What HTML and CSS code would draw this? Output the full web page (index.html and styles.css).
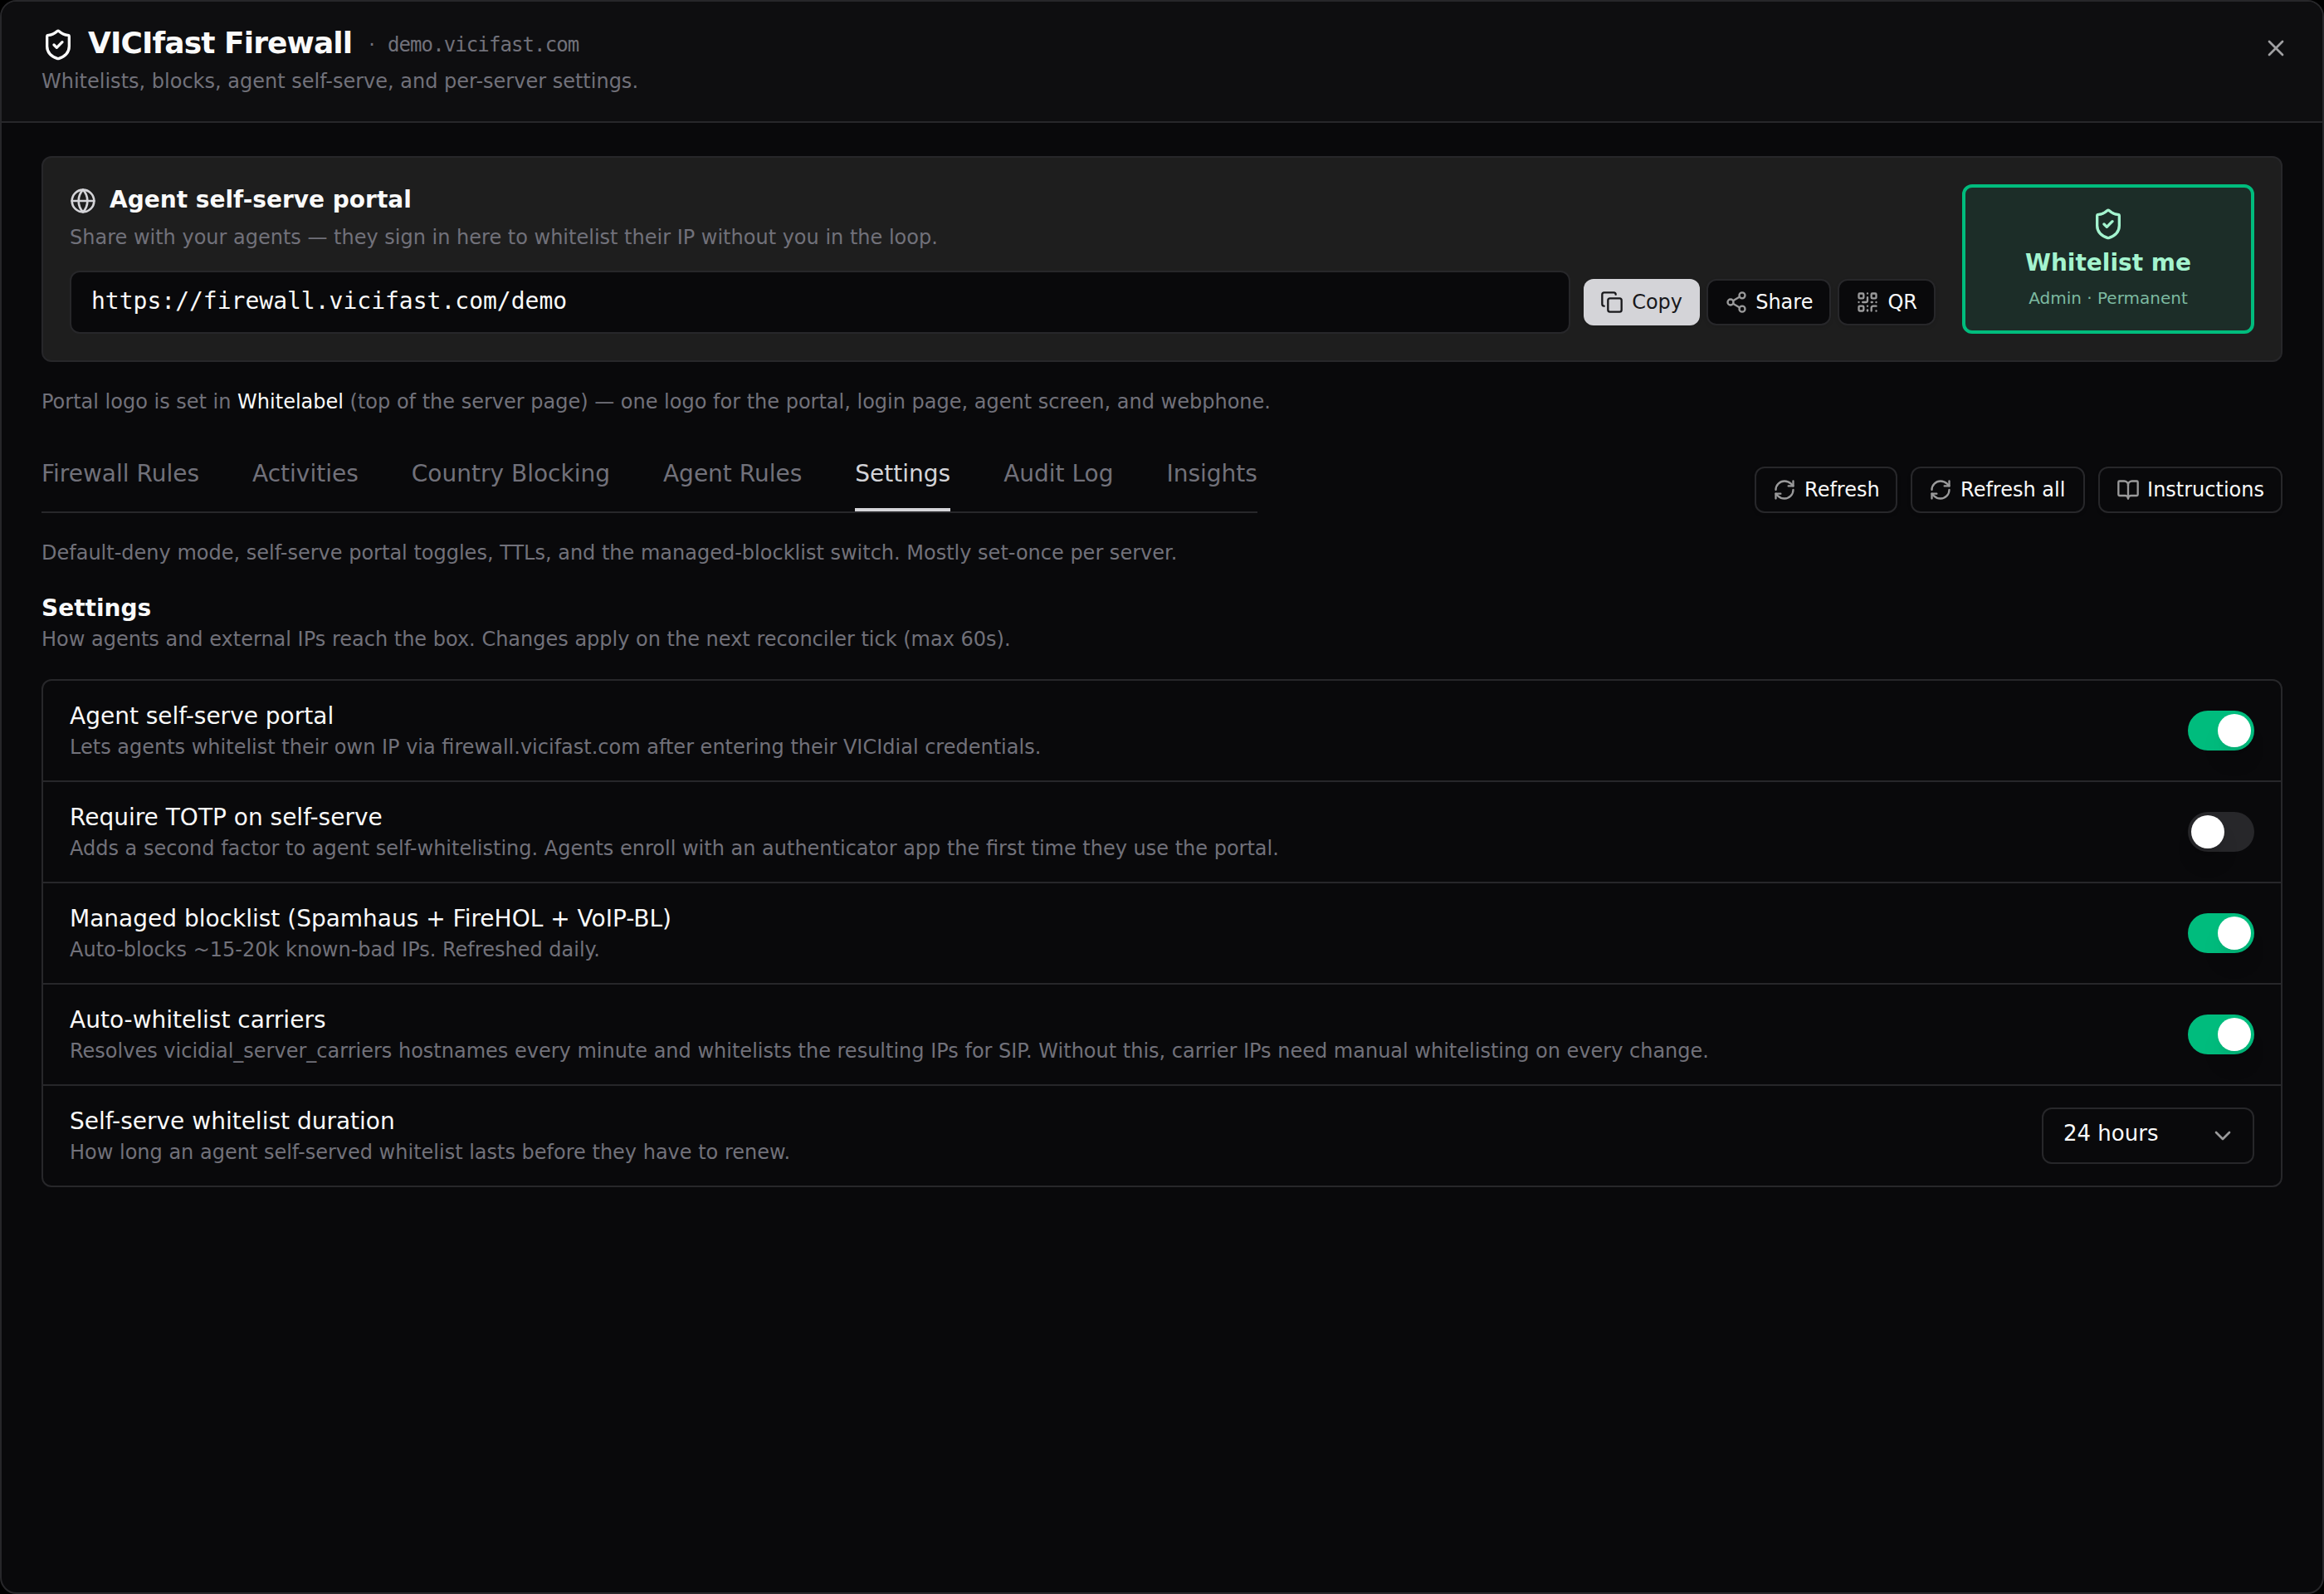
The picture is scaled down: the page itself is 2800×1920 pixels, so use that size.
FILE: index.html
```
<!DOCTYPE html>
<html lang="en">
<head>
<meta charset="utf-8">
<title>VICIfast Firewall</title>
<link rel="stylesheet" href="styles.css">
</head>
<body>
<svg class="sprite" aria-hidden="true">
  <symbol id="shield" viewBox="0 0 24 24"><path d="M20 13c0 5-3.5 7.5-7.66 8.95a1 1 0 0 1-.67-.01C7.5 20.5 4 18 4 13V6a1 1 0 0 1 1-1c2 0 4.5-1.2 6.24-2.72a1.17 1.17 0 0 1 1.52 0C14.51 3.81 17 5 19 5a1 1 0 0 1 1 1z"/><path d="m9 12 2 2 4-4"/></symbol>
  <symbol id="globe" viewBox="0 0 24 24"><circle cx="12" cy="12" r="10"/><path d="M12 2a14.5 14.5 0 0 0 0 20 14.5 14.5 0 0 0 0-20"/><path d="M2 12h20"/></symbol>
  <symbol id="copy" viewBox="0 0 24 24"><rect width="14" height="14" x="8" y="8" rx="2" ry="2"/><path d="M4 16c-1.1 0-2-.9-2-2V4c0-1.1.9-2 2-2h10c1.1 0 2 .9 2 2"/></symbol>
  <symbol id="share" viewBox="0 0 24 24"><circle cx="18" cy="5" r="3"/><circle cx="6" cy="12" r="3"/><circle cx="18" cy="19" r="3"/><path d="m8.59 13.51 6.83 3.98M15.41 6.51l-6.82 3.98"/></symbol>
  <symbol id="qr" viewBox="0 0 24 24"><rect width="5" height="5" x="3" y="3" rx="1"/><rect width="5" height="5" x="16" y="3" rx="1"/><rect width="5" height="5" x="3" y="16" rx="1"/><path d="M21 16h-3a2 2 0 0 0-2 2v3"/><path d="M21 21v.01"/><path d="M12 7v3a2 2 0 0 1-2 2H7"/><path d="M3 12h.01"/><path d="M12 3h.01"/><path d="M12 16v.01"/><path d="M16 12h1"/><path d="M21 12v.01"/><path d="M12 21v-1"/></symbol>
  <symbol id="refresh" viewBox="0 0 24 24"><path d="M3 12a9 9 0 0 1 9-9 9.75 9.75 0 0 1 6.74 2.74L21 8"/><path d="M21 3v5h-5"/><path d="M21 12a9 9 0 0 1-9 9 9.75 9.75 0 0 1-6.74-2.74L3 16"/><path d="M8 16H3v5"/></symbol>
  <symbol id="book" viewBox="0 0 24 24"><path d="M12 7v14"/><path d="M3 18a1 1 0 0 1-1-1V4a1 1 0 0 1 1-1h5a4 4 0 0 1 4 4 4 4 0 0 1 4-4h5a1 1 0 0 1 1 1v13a1 1 0 0 1-1 1h-6a3 3 0 0 0-3 3 3 3 0 0 0-3-3z"/></symbol>
  <symbol id="close" viewBox="0 0 24 24"><path d="M18 6 6 18"/><path d="m6 6 12 12"/></symbol>
  <symbol id="chevron" viewBox="0 0 24 24"><path d="m6 9 6 6 6-6"/></symbol>
</svg>
<div class="dialog">
  <header class="header">
    <div>
      <div class="title-row">
        <svg class="icon icon-xl"><use href="#shield"/></svg>
        <h1 class="title">VICIfast Firewall</h1>
        <span class="host-dot">·</span>
        <span class="host">demo.vicifast.com</span>
      </div>
      <p class="muted">Whitelists, blocks, agent self-serve, and per-server settings.</p>
    </div>
    <button class="close"><svg class="icon icon-lg"><use href="#close"/></svg></button>
  </header>
  <main class="body">
    <section class="portal">
      <div class="portal-main">
        <div class="portal-title">
          <svg class="icon icon-lg"><use href="#globe"/></svg>
          <h2 class="heading">Agent self-serve portal</h2>
        </div>
        <p class="muted portal-sub">Share with your agents — they sign in here to whitelist their IP without you in the loop.</p>
        <div class="url-row">
          <div class="url">https://firewall.vicifast.com/demo</div>
          <div class="url-actions">
            <button class="btn btn-primary"><svg class="icon"><use href="#copy"/></svg>Copy</button>
            <button class="btn btn-snug"><svg class="icon"><use href="#share"/></svg>Share</button>
            <button class="btn"><svg class="icon"><use href="#qr"/></svg>QR</button>
          </div>
        </div>
      </div>
      <button class="whitelist">
        <svg class="icon icon-xl"><use href="#shield"/></svg>
        <span class="whitelist-label">Whitelist me</span>
        <span class="whitelist-sub">Admin · Permanent</span>
      </button>
    </section>
    <p class="muted">Portal logo is set in <span class="strong">Whitelabel</span> (top of the server page) — one logo for the portal, login page, agent screen, and webphone.</p>
    <div class="toolbar">
      <nav class="tabs">
        <a class="tab">Firewall Rules</a>
        <a class="tab">Activities</a>
        <a class="tab">Country Blocking</a>
        <a class="tab">Agent Rules</a>
        <a class="tab tab-active">Settings</a>
        <a class="tab">Audit Log</a>
        <a class="tab">Insights</a>
      </nav>
      <div class="toolbar-actions">
        <button class="btn btn-refresh"><svg class="icon"><use href="#refresh"/></svg>Refresh</button>
        <button class="btn btn-refresh-all"><svg class="icon"><use href="#refresh"/></svg>Refresh all</button>
        <button class="btn btn-snug"><svg class="icon"><use href="#book"/></svg>Instructions</button>
      </div>
    </div>
    <p class="muted">Default-deny mode, self-serve portal toggles, TTLs, and the managed-blocklist switch. Mostly set-once per server.</p>
    <div>
      <h2 class="heading">Settings</h2>
      <p class="muted">How agents and external IPs reach the box. Changes apply on the next reconciler tick (max 60s).</p>
    </div>
    <section class="settings">
      <div class="row">
        <div><h3 class="row-title">Agent self-serve portal</h3><p class="muted">Lets agents whitelist their own IP via firewall.vicifast.com after entering their VICIdial credentials.</p></div>
        <span class="switch switch-on"><span class="knob"></span></span>
      </div>
      <div class="row">
        <div><h3 class="row-title">Require TOTP on self-serve</h3><p class="muted">Adds a second factor to agent self-whitelisting. Agents enroll with an authenticator app the first time they use the portal.</p></div>
        <span class="switch"><span class="knob"></span></span>
      </div>
      <div class="row">
        <div><h3 class="row-title">Managed blocklist (Spamhaus + FireHOL + VoIP-BL)</h3><p class="muted">Auto-blocks ~15-20k known-bad IPs. Refreshed daily.</p></div>
        <span class="switch switch-on"><span class="knob"></span></span>
      </div>
      <div class="row">
        <div><h3 class="row-title">Auto-whitelist carriers</h3><p class="muted">Resolves vicidial_server_carriers hostnames every minute and whitelists the resulting IPs for SIP. Without this, carrier IPs need manual whitelisting on every change.</p></div>
        <span class="switch switch-on"><span class="knob"></span></span>
      </div>
      <div class="row">
        <div><h3 class="row-title">Self-serve whitelist duration</h3><p class="muted">How long an agent self-served whitelist lasts before they have to renew.</p></div>
        <div class="select"><span class="select-value">24 hours</span><svg class="icon icon-lg"><use href="#chevron"/></svg></div>
      </div>
    </section>
  </main>
</div>
</body>
</html>
```
FILE: styles.css
```
* { box-sizing: border-box; margin: 0; padding: 0; }

body {
  background: #000;
  color: #fafafa;
  font-family: "DejaVu Sans", sans-serif;
  font-size: 24px;
  line-height: 32px;
}

button { font: inherit; color: inherit; background: none; border: 0; }

.sprite { display: none; }

.icon {
  width: 28px;
  height: 28px;
  flex-shrink: 0;
  fill: none;
  stroke: currentColor;
  stroke-width: 2;
  stroke-linecap: round;
  stroke-linejoin: round;
}
.icon-lg { width: 32px; height: 32px; }
.icon-xl { width: 40px; height: 40px; }

.muted { color: #71717a; }
.strong { color: #fafafa; }

.dialog {
  height: 1920px;
  display: flex;
  flex-direction: column;
  overflow: hidden;
  background: #09090b;
  border: 2px solid #27272a;
  border-radius: 20px;
}

.header {
  display: flex;
  justify-content: space-between;
  align-items: flex-start;
  padding: 32px 40px 32px 48px;
  background: #0e0e10;
  border-bottom: 2px solid #27272a;
}
.title-row { display: flex; align-items: center; height: 40px; margin-bottom: 8px; letter-spacing: -0.9px; }
.title {
  margin: 0 20px 4px 16px;
  font-size: 36px;
  line-height: 36px;
  font-weight: 700;
}
.host-dot { color: #71717a; margin-right: 16px; }
.host { font-family: "DejaVu Sans Mono", monospace; color: #71717a; }
.close { display: flex; margin-top: 8px; color: #a0a0a2; }

.body { display: flex; flex-direction: column; gap: 32px; padding: 40px 48px; }

.heading { margin-bottom: 2px; font-size: 28px; line-height: 38px; font-weight: 700; }

.portal {
  display: flex;
  gap: 32px;
  padding: 32px;
  background: #1e1e1e;
  border: 2px solid #27272a;
  border-radius: 12px;
}
.portal-main { flex: 1; }
.portal-title { display: flex; align-items: center; gap: 16px; }
.portal-title .icon { color: #d4d4d8; }
.portal-sub { margin: 8px 0 24px; }
.url-row { display: flex; align-items: center; gap: 16px; }
.url {
  flex: 1;
  height: 76px;
  padding: 0 24px;
  background: #09090b;
  border: 2px solid #27272a;
  border-radius: 12px;
  font-family: "DejaVu Sans Mono", monospace;
  font-size: 28px;
  line-height: 70px;
}
.url-actions { display: flex; gap: 8px; }

.btn {
  display: flex;
  align-items: center;
  gap: 10px;
  height: 56px;
  padding: 0 20px;
  background: #09090b;
  border: 2px solid #27272a;
  border-radius: 12px;
  box-shadow: 0 2px 4px rgba(0, 0, 0, 0.1);
}
.btn .icon { color: #9a9a9b; }
.btn-primary { width: 140px; background: #d4d4d8; border: 0; color: #18181b; }
.btn-primary .icon { color: #18181b; }
.btn-snug { gap: 9px; }
.btn-refresh { width: 172px; }
.btn-refresh-all { width: 210px; }

.whitelist {
  width: 352px;
  height: 180px;
  display: flex;
  flex-direction: column;
  align-items: center;
  padding-top: 24px;
  background: #1c2d28;
  border: 4px solid #00bc7d;
  border-radius: 12px;
  color: #a4f4cf;
}
.whitelist-label { margin: 7px 0 8px; font-size: 28px; line-height: 40px; font-weight: 700; }
.whitelist-sub { font-size: 20px; line-height: 28px; color: #7cbaa0; }

.toolbar { display: flex; justify-content: space-between; align-items: flex-end; height: 86px; }
.tabs { display: flex; gap: 64px; height: 86px; border-bottom: 2px solid #27272a; }
.tab {
  padding-top: 19px;
  font-size: 28px;
  line-height: 40px;
  color: #71717a;
  border-bottom: 4px solid transparent;
}
.tab-active { color: #d4d4d8; border-color: #d4d4d8; }
.toolbar-actions { display: flex; gap: 16px; }

.settings { border: 2px solid #27272a; border-radius: 12px; }
.row {
  display: flex;
  justify-content: space-between;
  align-items: center;
  height: 120px;
  padding: 0 32px;
}
.row + .row { height: 122px; border-top: 2px solid #27272a; }
.row-title { margin-bottom: 2px; font-size: 28px; line-height: 38px; font-weight: 400; }

.switch { display: flex; width: 80px; height: 48px; padding: 4px; border-radius: 24px; background: #27272a; }
.switch-on { background: #00bc7d; justify-content: flex-end; }
.knob {
  width: 40px;
  height: 40px;
  border-radius: 50%;
  background: #fff;
  box-shadow: 0 20px 30px -6px rgba(0, 0, 0, 0.1), 0 8px 12px -8px rgba(0, 0, 0, 0.1);
}

.select {
  display: flex;
  justify-content: space-between;
  align-items: center;
  width: 256px;
  height: 68px;
  padding: 0 20px 0 24px;
  border: 2px solid #27272a;
  border-radius: 12px;
}
.select-value { font-size: 26px; margin-bottom: 6px; }
.select .icon { color: #9a9a9b; }
```
